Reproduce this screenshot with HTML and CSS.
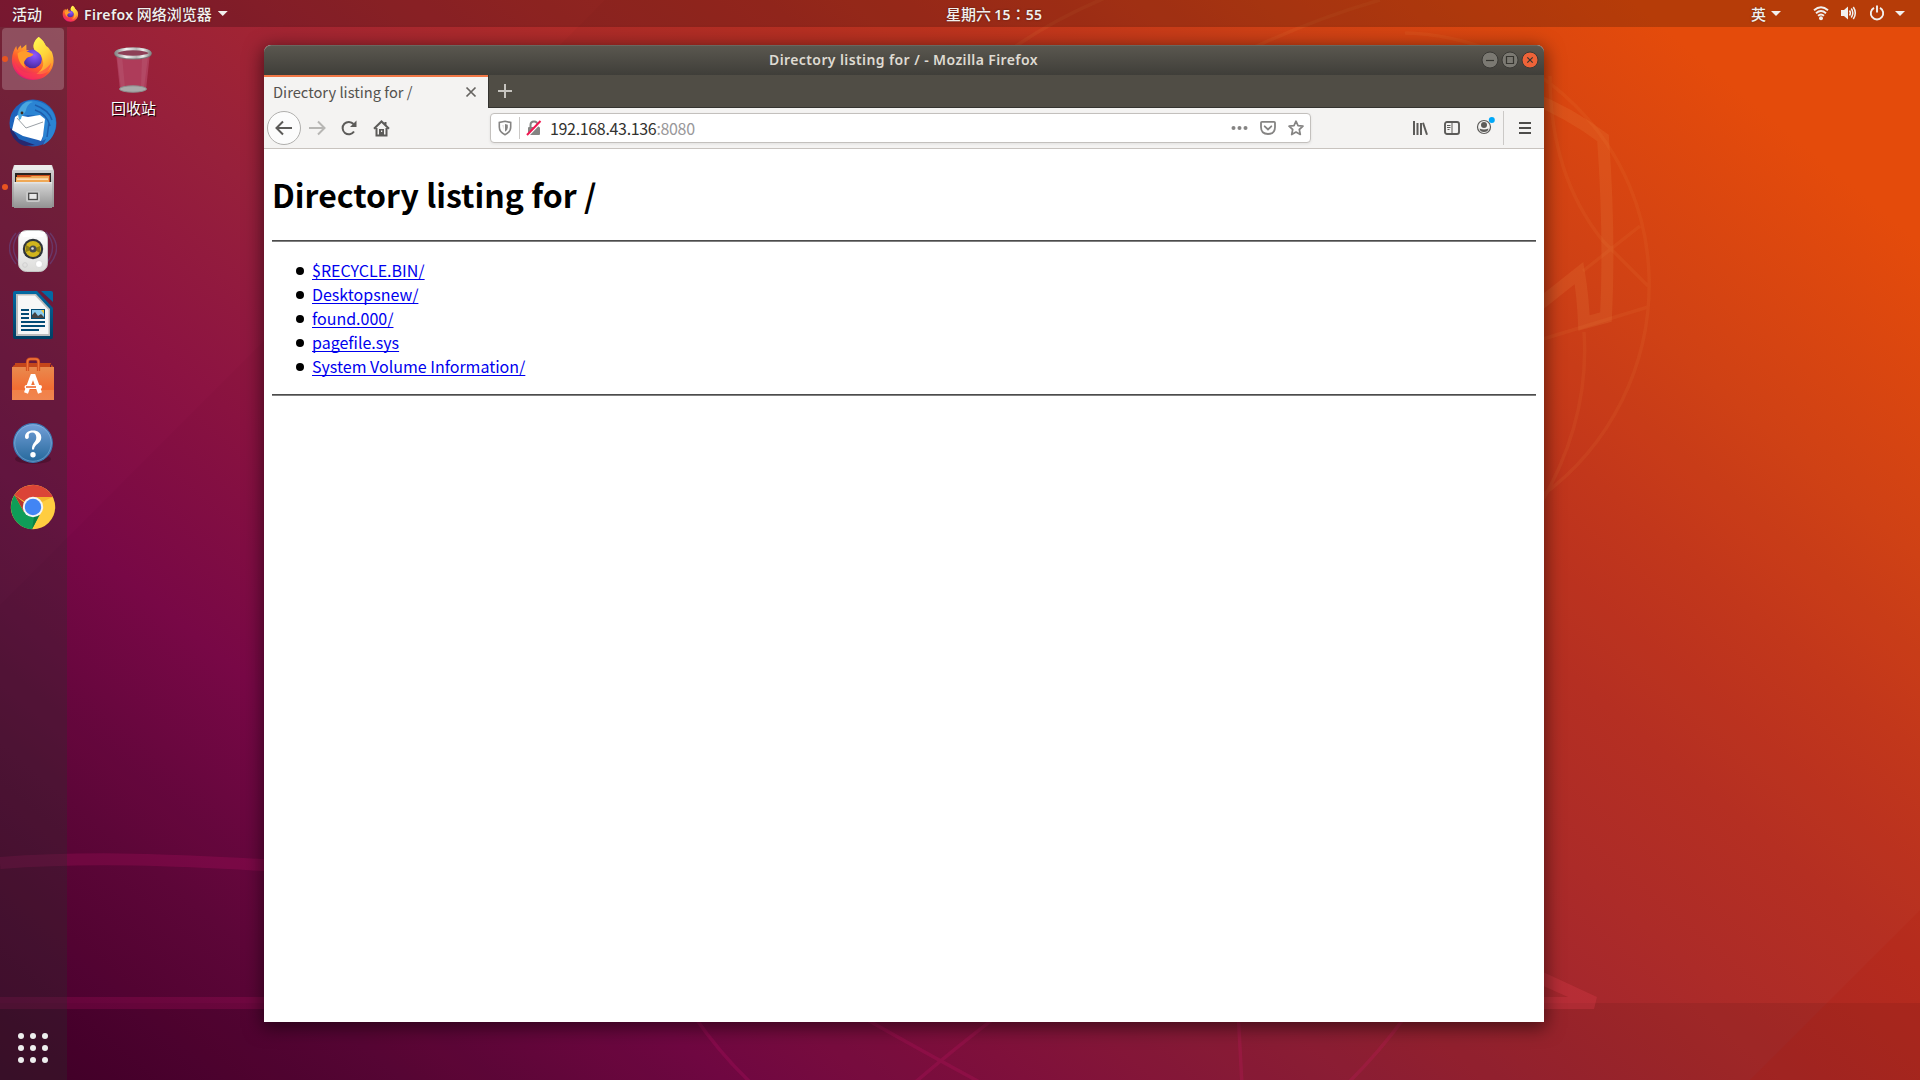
FILE: index.html
```html
<!DOCTYPE html>
<html lang="zh-CN">
<head>
<meta charset="utf-8">
<title>Directory listing for / - Mozilla Firefox</title>
<link rel="stylesheet" href="styles.css">
</head>
<body>
<svg width="0" height="0" class="defs">
  <defs>
    <linearGradient id="ffBody" x1=".8" y1="0" x2=".3" y2="1"><stop offset="0" stop-color="#fff44f"/><stop offset=".35" stop-color="#ffb02e"/><stop offset=".65" stop-color="#ff5a2c"/><stop offset="1" stop-color="#e3127c"/></linearGradient>
    <radialGradient id="ffGlobe" cx=".6" cy=".3" r=".7"><stop offset="0" stop-color="#9059ff"/><stop offset=".5" stop-color="#6b42d8"/><stop offset="1" stop-color="#4b2a9b"/></radialGradient>
    <linearGradient id="ffFlame" x1=".3" y1="0" x2=".8" y2="1"><stop offset="0" stop-color="#fff44f"/><stop offset=".5" stop-color="#ffd339"/><stop offset="1" stop-color="#ff8a2c"/></linearGradient>
    <linearGradient id="tbBlue" x1="0" y1="0" x2="1" y2="1"><stop offset="0" stop-color="#1f5fbb"/><stop offset=".55" stop-color="#1d69bd"/><stop offset="1" stop-color="#2a4aa5"/></linearGradient>
    <linearGradient id="metal" x1="0" y1="0" x2="0" y2="1"><stop offset="0" stop-color="#d8d8d8"/><stop offset="1" stop-color="#929292"/></linearGradient>
    <linearGradient id="writer" x1="0" y1="0" x2="0" y2="1"><stop offset="0" stop-color="#0369a3"/><stop offset="1" stop-color="#023f63"/></linearGradient>
    <linearGradient id="bag" x1="0" y1="0" x2="0" y2="1"><stop offset="0" stop-color="#e98a4e"/><stop offset=".68" stop-color="#f26c32"/><stop offset=".7" stop-color="#f28148"/><stop offset="1" stop-color="#f08550"/></linearGradient>
    <linearGradient id="help" x1="0" y1="0" x2="0" y2="1"><stop offset="0" stop-color="#739fd8"/><stop offset="1" stop-color="#25689b"/></linearGradient>
    <linearGradient id="rim" x1="0" y1="0" x2="1" y2="0"><stop offset="0" stop-color="#8d8d8d"/><stop offset=".3" stop-color="#f2f2f2"/><stop offset=".6" stop-color="#b8b8b8"/><stop offset=".8" stop-color="#eee"/><stop offset="1" stop-color="#8d8d8d"/></linearGradient>
    <linearGradient id="white" x1="0" y1="0" x2="0" y2="1"><stop offset="0" stop-color="#fff"/><stop offset="1" stop-color="#dcdcda"/></linearGradient>
    <symbol id="firefox" viewBox="0 0 48 48">
      <path fill="url(#ffBody)" d="M30 2c4 3 6 6 7.500 9.500 2 .8 3.500 2.500 4.500 4.800 1 0 1.800 1.500 2.300 3.200C49 34 39 47 24 47 11 47 1.500 37 2 25c.3-6 2.500-10.500 4.500-13.500L7.500 16c.8-2.200 2-3.800 3.800-5.400L12 14l5-4 .2 6c4-.8 8 .4 10 2C22 13 26 5 30 2z"/>
      <circle cx="23.500" cy="25" r="9.800" fill="url(#ffGlobe)"/>
      <path fill="url(#ffFlame)" d="M30 2c4 3 6 6 7.500 9.500 6 5.500 8.500 15 5 23-3.500 5.500-9 7.500-15 6 6-3.500 8.500-9 6.500-15-.8-4-3-6.500-6.500-8.500C21.500 12.500 25.500 5 30 2z"/>
      <path fill="#ff9c2a" d="M8 19c4-2.500 7-3 10-1.500 2.500.5 4 2 6.500 2.200-.5 2-3 2.600-5 3.300-2.500 1-3 2.500-4.500 4.500-1 3 .5 5.500 2 7.500-6-3-9-10-9-16z"/>
      <path fill="#ff3b51" opacity=".55" d="M4 25c2 9 9 15 18 15 9 0 16-4 21-11-2 11-10 17-19 17C13 46 4 38 4 25z"/>
    </symbol>
  </defs>
</svg>

<svg class="wallpaper" viewBox="0 0 1920 1080" aria-hidden="true">
  <path class="shade" d="M605 0H1920V1080H0V605z"/>
  <path class="shade strong" d="M0 1003H1920V1080H0z"/>
  <path class="glow" d="M1920 910V1080H1750z"/>
  <g class="pink">
    <path class="thick" d="M0 863C80 857 170 858 320 869"/>
    <path class="thick" d="M0 1003H320"/>
    <path class="thin" d="M690 1010Q718 1052 752 1084M850 1010Q920 1050 985 1085M1005 1010Q955 1048 912 1085M1238 1010L1242 1085M1410 1010Q1380 1052 1346 1085"/>
  </g>
  <path class="tail" fill-rule="evenodd" d="M1530 966L1597 997L1594 1009H1530zM1530 980L1568 997H1530z"/>
  <g class="amber">
    <path class="thick" d="M1530 97Q1570 113 1603 138Q1610 235 1606 317L1584 323Q1583 297 1579 273L1530 312"/>
    <path class="thin" d="M1405 33A250 250 0 0 1 1649 275A262 262 0 0 1 1540 497M1550 76Q1550 175 1603 241L1648 286M1640 226L1583 271M1648 307L1530 343M1584 332Q1590 420 1540 505M1010 50Q1060 15 1120 -8M1240 54Q1310 20 1380 0"/>
  </g>
</svg>

<header class="topbar">
  <div class="top-left">
    <span class="activities">活动</span>
    <span class="appmenu"><svg width="17" height="17"><use href="#firefox"/></svg><b><span class="ff">Firefox</span> 网络浏览器</b><i class="caret"></i></span>
  </div>
  <div class="clock">星期六 <span class="digits">15</span><span class="colon" lang="zh-TW">：</span><span class="digits">55</span></div>
  <div class="top-right">
    <span class="lang">英</span><i class="caret"></i>
    <svg class="wifi" width="16" height="16" viewBox="0 0 16 16"><g fill="none" stroke="#f2f0ee" stroke-width="1.900"><path d="M1 5.300Q8 -.8 15 5.300"/><path d="M3 8.200Q8 3.800 13 8.200"/><path d="M5 10.800Q8 8.300 11 10.800"/></g><circle cx="8" cy="13.300" r="2" fill="#f2f0ee"/></svg>
    <svg class="volume" width="17" height="16" viewBox="0 0 17 16"><path fill="#f2f0ee" d="M1 5h3l4-3.500v13L4 11H1z"/><g fill="none" stroke="#f2f0ee" stroke-width="1.500"><path d="M9.500 5.500q1.800 2.500 0 5"/><path d="M11.300 3.500q3 4.500 0 9"/><path d="M13.300 2q4 6 0 12"/></g></svg>
    <svg class="power" width="16" height="16" viewBox="0 0 16 16" fill="none" stroke="#f2f0ee" stroke-width="1.900"><path d="M5 2.800A6.200 6.200 0 1 0 11 2.800M8 .5V7.500"/></svg>
    <i class="caret last"></i>
  </div>
</header>

<nav class="dock">
  <div class="launcher active running"><svg width="46" height="48" viewBox="0 0 48 48"><use href="#firefox"/></svg></div>
  <div class="launcher"><svg width="48" height="48" viewBox="0 0 48 48">
    <circle cx="24" cy="24" r="23.500" fill="url(#tbBlue)"/>
    <path fill="#27286f" d="M2 29L10 40l16 6-10 1C8 45 2 37 1 30z"/>
    <path fill="#2b84d3" d="M8 16C10 6 18-1 27 2c12 2 20 11 20 22 0 10-5 18-13 22l3-6-4 2c2-8 3-15 0-20-3-6-13-7-19-5l-4 6-2 0z"/>
    <path fill="#fff" d="M3 31L6 18l3-2 10 2 12-2 5 4-2 17-2 5-3-1-15-4z"/>
    <path fill="none" stroke="#9aa0a6" d="M8 19l9 10 17-6"/>
    <path fill="#4aa7df" d="M9 15C11 6 17 1 24 3c-4 1-6 4-7 8-1 4-4 4-5 9l-2 1z"/>
    <path fill="none" stroke="#1d5dae" stroke-width="1.500" d="M26 6q14 5 17 15M26 11q12 4 15 16M40 24l-2 14"/>
    <circle cx="13" cy="14" r="1.400" fill="#3c2b20"/>
  </svg></div>
  <div class="launcher running"><svg width="48" height="48" viewBox="0 0 48 48">
    <path fill="url(#metal)" d="M5 2h38l2 6v36h-2V22H5v22H3V8z"/><path fill="#ececec" d="M6 2h36l2 5H4z"/>
    <path fill="#292421" d="M6 10h36v10H6z"/><path fill="#cb4c19" d="M8 12h33v7H8z"/><path fill="#efa856" d="M7 14h14l2-1h17v7H7z"/><path fill="#fff3dd" d="M8 15.500h31v1.200H8z"/>
    <path fill="url(#metal)" d="M5 19h38v26H5z"/><path fill="#e4e4e4" d="M5 19h38v1.500H5z"/>
    <rect x="17" y="28" width="14" height="11" rx="2" fill="#c9c9c9"/><rect x="19.700" y="30.300" width="8.600" height="6.200" fill="#e8e8e8" stroke="#4a4a4a" stroke-width="1.300"/>
  </svg></div>
  <div class="launcher"><svg width="48" height="48" viewBox="0 0 48 48">
    <g fill="none" stroke="#6560ad" stroke-width="1.400" opacity=".4"><path d="M7 6Q-6 21 7 37M11 5Q-2 20 11 37M41 6q13 15 0 31M37 5q13 15 0 32"/></g>
    <rect x="9.500" y="3.500" width="29" height="41" rx="8" fill="url(#white)" stroke="#c4c4c4"/><path fill="#fff" d="M12 5h24l-2 5H14z"/>
    <circle cx="24" cy="22" r="10.200" fill="#30353a"/><circle cx="24" cy="22" r="8" fill="#d1b51d"/><path fill="#8f7e12" d="M24 22l-7-4v7zM24 22l7-3v7z"/><circle cx="24" cy="22" r="3.500" fill="#474b4e"/><circle cx="23.500" cy="21.500" r="1.300" fill="#ddd"/><circle cx="30" cy="37" r="3.500" fill="#fff" stroke="#ccc" stroke-width=".6"/><circle cx="16" cy="38" r="2.300" fill="none" stroke="#d0d0d0"/>
  </svg></div>
  <div class="launcher"><svg width="48" height="48" viewBox="0 0 48 48">
    <path fill="url(#writer)" d="M6 0h22l16 17v29q0 2-2 2H6q-2 0-2-2V2q0-2 2-2z"/><path fill="#0369a3" d="M32 0h10q2 0 2 2v9z"/>
    <path fill="#bdbdbd" d="M7 3h20l14 15v27H7z"/><path fill="#f7f7f7" d="M9 4.500h17L39.500 19v24H9z"/>
    <path fill="#034b75" d="M12 18h8v2h-8zM12 22h8v2h-8zM12 26h8v2h-8zM12 30h24v2H12zM12 34h24v2H12zM12 38h18v2H12z"/>
    <path fill="#034b75" d="M22 18h14v10H22z"/><path fill="#8bcdf0" d="M23 19h12v8H23z"/><path fill="#f0c63b" d="M32 19h3v4z"/><path fill="#444" d="M23 27v-3l3-3 3 4 3-2 3 3v1z"/>
  </svg></div>
  <div class="launcher"><svg width="48" height="48" viewBox="0 0 48 48">
    <path fill="#c4451a" d="M6 8h36v6H6zM4 11l3-2v5H3zM44 11l-3-2v5h4z"/>
    <path fill="url(#bag)" d="M3 12h42v33H3z"/><path fill="none" stroke="#ce4c1d" stroke-width="3.200" d="M18.500 16V7q0-3 3-3h5q3 0 3 3v9"/><path fill="none" stroke="#f0743a" stroke-width="1.500" d="M18.500 16V7q0-3 3-3h5q3 0 3 3v9"/>
    <path fill="none" stroke="#fff" stroke-width="4.200" d="M17 38l6.300-17h1.400L31 38"/><rect x="15.500" y="30" width="17.500" height="4" rx="2" fill="#fff"/><path stroke="#f06a30" stroke-width="1.600" d="M17 32h10"/>
  </svg></div>
  <div class="launcher"><svg class="help" width="48" height="48" viewBox="0 0 48 48">
    <ellipse cx="24" cy="40" rx="18" ry="5" opacity=".2"/><circle cx="24" cy="24" r="19.300" fill="url(#help)" stroke="#3c78b4" stroke-width="1.200"/><circle cx="24" cy="24" r="18.300" fill="none" stroke="#9fc4e8" stroke-width=".8" opacity=".6"/>
    <path fill="#fff" d="M16 18c0-4 3-6.500 8-6.500s8.300 2.700 8.300 7c0 6-7 6.500-7.300 12h-2c-.3-7 4.300-7 4.300-12 0-3-1.500-5-4-5-2.600 0-4 1.500-3.500 3.500.8 3.500-3.800 4-3.800 1z"/><circle cx="24" cy="35.700" r="2.700" fill="#fff"/>
  </svg></div>
  <div class="launcher"><svg width="48" height="48" viewBox="0 0 48 48">
    <circle cx="24" cy="24" r="22.200" fill="#ffcd40"/>
    <path fill="#db4437" d="M24 24L5.500 12A22.200 22.200 0 0 1 43.800 14H24z"/><path fill="#0f9d58" d="M5.500 12A22.200 22.200 0 0 0 23 46.200L31 31 24 24 15 29z"/>
    <path fill="#f4b52e" d="M24 14h19.800L33 19z"/><path fill="#b7352c" d="M5.500 12l9.500 17 2-8z"/><path fill="#0b8043" d="M31 31l-8 15.200L25 34z"/>
    <circle cx="24" cy="24" r="10.200" fill="#f5f5f5"/><circle cx="24" cy="24" r="8.200" fill="#4285f4"/>
  </svg></div>
  <svg class="apps" width="48" height="48" viewBox="0 0 48 48" fill="#eee"><circle cx="12" cy="12" r="3"/><circle cx="24" cy="12" r="3"/><circle cx="36" cy="12" r="3"/><circle cx="12" cy="24" r="3"/><circle cx="24" cy="24" r="3"/><circle cx="36" cy="24" r="3"/><circle cx="12" cy="36" r="3"/><circle cx="24" cy="36" r="3"/><circle cx="36" cy="36" r="3"/></svg>
</nav>

<div class="trash">
  <svg width="48" height="50" viewBox="0 0 48 50">
    <path fill="#c4587a" fill-opacity=".5" d="M7 7h34l-4 37H11z"/><path fill="#fff" opacity=".07" d="M8 10h5l3 32h-4zM33 10h6l-4 32h-3z"/>
    <ellipse cx="24" cy="43" rx="13.500" ry="3.200" fill="#aaa" stroke="#8d8d8d"/>
    <ellipse cx="24" cy="7.500" rx="17.300" ry="4.600" fill="none" stroke="#777" stroke-width="3"/><ellipse cx="24" cy="7" rx="17" ry="4.200" fill="#8d4057" stroke="url(#rim)" stroke-width="2.800"/>
  </svg>
  <span>回收站</span>
</div>

<section class="window">
  <div class="titlebar">
    <span class="title">Directory listing for / - Mozilla Firefox</span>
    <div class="controls">
      <svg width="18" height="18" viewBox="0 0 18 18"><circle cx="9" cy="9" r="8" class="ctl"/><path d="M5 9.500h8"/></svg>
      <svg width="18" height="18" viewBox="0 0 18 18"><circle cx="9" cy="9" r="8" class="ctl"/><path d="M5.500 5.500h7v7h-7z"/></svg>
      <svg width="18" height="18" viewBox="0 0 18 18"><circle cx="9" cy="9" r="8" class="ctl close"/><path d="M6.300 6.300l5.400 5.400M11.700 6.300l-5.400 5.400"/></svg>
    </div>
  </div>
  <div class="tabs">
    <div class="tab"><span>Directory listing for /</span><svg width="12" height="12" viewBox="0 0 12 12"><path d="M1.500 1.500l9 9M10.500 1.500l-9 9" stroke="#666461" stroke-width="1.700"/></svg></div>
    <svg class="newtab" width="14" height="14" viewBox="0 0 14 14"><path d="M7 0v14M0 7h14" stroke="#c6c4bf" stroke-width="2"/></svg>
  </div>
  <div class="toolbar">
    <div class="nav">
      <span class="back"><svg width="18" height="16" viewBox="0 0 18 16"><path class="ln" d="M17 8H2M8 1.500L1.500 8 8 14.500"/></svg></span>
      <svg class="forward" width="18" height="16" viewBox="0 0 18 16"><path class="ln dim" d="M1 8h15M10 1.500L16.500 8 10 14.500"/></svg>
      <svg class="reload" width="16" height="16" viewBox="0 0 16 16"><path class="ln" d="M13 11.500A6.200 6.200 0 1 1 12.500 4"/><path fill="#5c5b59" d="M15.500.5v6.500H9z"/></svg>
      <svg class="home" width="17" height="17" viewBox="0 0 17 17"><path class="ln" d="M1 8.700L8.500 1.500 16 8.700M3.500 8v7.500h10V8M12.500 2v3"/><path fill="#5c5b59" d="M6 9h5v6H6z"/><path fill="#f4f3f2" d="M8 10.500h1.200v1.500H8z"/></svg>
    </div>
    <div class="urlbar">
      <svg width="14" height="16" viewBox="0 0 14 16"><path fill="none" stroke="#858483" stroke-width="1.600" d="M7 1.200L12.700 2.500v4.500q0 5-5.700 7.700Q1.300 12 1.300 7V2.500z"/><path fill="#858483" d="M7 4l2.800.8v3q0 2.200-2.800 4z"/><path fill="#858483" d="M4.500 5h1v5z" opacity=".4"/></svg>
      <i class="sep"></i>
      <svg class="lock" width="16" height="16" viewBox="0 0 16 16"><path fill="none" stroke="#858483" stroke-width="2" d="M4.500 8V5q0-3.500 3.500-3.500T11.500 5v3"/><rect x="2" y="7" width="12" height="8" rx="1" fill="#858483"/><path stroke="#fff" stroke-width="3" d="M1.500 15.500L15 1.500"/><path stroke="#f0164f" stroke-width="2" d="M1 15L14.500 1"/></svg>
      <span class="url">192.168.43.136<em>:8080</em></span>
      <svg class="dots" width="17" height="6" viewBox="0 0 17 6" fill="#858483"><circle cx="2.500" cy="3" r="2"/><circle cx="8.500" cy="3" r="2"/><circle cx="14.500" cy="3" r="2"/></svg>
      <svg class="pocket" width="16" height="16" viewBox="0 0 16 16" fill="none" stroke="#858483" stroke-width="1.800"><path d="M2 1.800h12q1 0 1 1V7Q15 14 8 14T1 7V2.800q0-1 1-1z"/><path stroke-linecap="round" d="M4.700 6.300L8 9.500l3.300-3.200"/></svg>
      <svg class="star" width="16" height="16" viewBox="0 0 16 16" fill="none" stroke="#858483" stroke-width="1.700" stroke-linejoin="round"><path d="M8 1.200l2 4.500 5 .5-3.700 3.300 1 5L8 12l-4.300 2.500 1-5L1 6.200l5-.5z"/></svg>
    </div>
    <div class="tools">
      <svg width="16" height="16" viewBox="0 0 16 16"><path stroke="#5c5b59" stroke-width="2" d="M2 1v14M5.500 3v12M9 3v12M11 2.700l4 12"/></svg>
      <svg class="sidebar" width="16" height="14" viewBox="0 0 16 14"><rect x="1" y="1" width="14" height="12" rx="2" fill="none" stroke="#5c5b59" stroke-width="1.900"/><path stroke="#5c5b59" d="M8 1v12M3 4.500h3.500M3 6.500h3.500M3.500 8.500h2"/></svg>
      <svg class="account" width="19" height="18" viewBox="0 0 19 18"><circle cx="8" cy="10" r="6.500" fill="none" stroke="#5c5b59" stroke-width="1.200"/><circle cx="8" cy="8" r="3" fill="#5c5b59"/><path fill="#5c5b59" d="M3.500 11.500q4.500 2 9 0Q12 15 8 15T3.500 11.500z"/><circle cx="15.800" cy="3" r="3" fill="#00a8f8"/></svg>
      <i class="sep"></i>
      <svg class="menu" width="12" height="12" viewBox="0 0 12 12"><path stroke="#4d4c4a" stroke-width="1.900" d="M0 1h12M0 6h12M0 11h12"/></svg>
    </div>
  </div>
  <main class="page">
    <h1>Directory listing for /</h1>
    <hr>
    <ul>
      <li><a href="#">$RECYCLE.BIN/</a></li>
      <li><a href="#">Desktopsnew/</a></li>
      <li><a href="#">found.000/</a></li>
      <li><a href="#">pagefile.sys</a></li>
      <li><a href="#">System Volume Information/</a></li>
    </ul>
    <hr>
  </main>
</section>
</body>
</html>
```
FILE: styles.css
```css
* { box-sizing: border-box; }
html, body { height: 100%; }
body {
  margin: 0;
  overflow: hidden;
  display: flex;
  flex-direction: column;
  font-family: "Noto Sans CJK SC", sans-serif;
  background: linear-gradient(40deg, #46002b 0%, #5f073a 12.6%, #7b0948 22.6%, #8c1342 32%, #97203b 41%, #a32532 48%, #b02c29 57%, #b93023 64%, #c6391c 72%, #d44316 79.300%, #e94d0c 91%);
}
svg { display: block; flex: none; }
.defs, .wallpaper { position: absolute; left: 0; top: 0; }
.wallpaper { width: 1920px; height: 1080px; }
.shade { fill: #000; fill-opacity: .02; }
.shade.strong { fill-opacity: .07; }
.glow { fill: #b41400; fill-opacity: .12; }
.pink { fill: none; stroke: #e01a78; stroke-opacity: .17; }
.amber { fill: none; stroke: #f09a50; stroke-opacity: .15; }
.thick { stroke-width: 12px; }
.thin { stroke-width: 3.500px; }
.amber .thin { stroke-opacity: .09; }
.tail { fill: #d83a48; fill-opacity: .35; }

.topbar {
  position: relative;
  height: 27px;
  flex: none;
  display: grid;
  grid-template-columns: 1fr auto 1fr;
  align-items: center;
  background: rgba(0, 0, 0, .2);
  color: #f2f0ee;
  font-size: 15px;
  line-height: 27px;
  font-weight: 500;
  text-shadow: 0 0 2px rgba(0, 0, 0, .5);
}
.top-left, .top-right, .appmenu { display: flex; align-items: center; }
.top-left { padding-left: 12px; gap: 20px; height: 27px; }
.activities, .appmenu b, .lang { margin-top: 0; }
.appmenu svg { margin-right: 6px; margin-top: -1px; }
.appmenu b { font-weight: 500; white-space: nowrap; }
.appmenu .ff, .title, .digits { font-family: "Noto Sans", sans-serif; font-weight: 600; font-size: 14px; }
.appmenu .ff { letter-spacing: .35px; margin-left: -1px; }
.lang { margin-right: -1px; }
.caret {
  width: 10px;
  height: 5px;
  margin-left: 6px;
  background: #f2f0ee;
  clip-path: polygon(0 0, 100% 0, 50% 100%);
}
.clock { height: 27px; margin: -1px 0 0 68px; white-space: pre; }
.colon { font-family: "Noto Sans CJK TC", sans-serif; }
.digits { letter-spacing: .2px; }
.top-right { justify-content: flex-end; padding-right: 15px; height: 27px; }
.wifi { margin-left: 32px; }
.volume { margin-left: 11px; }
.power { margin-left: 12px; }
.wifi, .volume, .power { margin-top: -1px; }
.caret.last { margin-left: 10px; }

.dock {
  position: relative;
  width: 67px;
  flex: 1;
  display: flex;
  flex-direction: column;
  align-items: flex-start;
  gap: 2px;
  padding: 1px 0 8px 2px;
  background: rgba(40, 50, 42, .3);
}
.launcher {
  position: relative;
  width: 62px;
  height: 62px;
  flex: none;
  display: flex;
  align-items: center;
  justify-content: center;
  border-radius: 4px;
}
.launcher.active { background: rgba(255, 255, 255, .2); }
.launcher.active svg { margin-top: -2px; }
.launcher.running::before {
  content: "";
  position: absolute;
  left: 0;
  top: 28px;
  width: 6px;
  height: 6px;
  border-radius: 50%;
  background: #e95420;
}
.apps { margin: auto 0 0 7px; }

.trash {
  position: absolute;
  left: 92px;
  top: 46px;
  width: 82px;
  display: flex;
  flex-direction: column;
  align-items: center;
  color: #fff;
  font-size: 15px;
  line-height: 22px;
  text-shadow: 1px 1px 1px #000;
}
.trash span { margin-top: 1px; padding-left: 1px; }

.window {
  position: absolute;
  left: 264px;
  top: 45px;
  width: 1280px;
  height: 977px;
  display: flex;
  flex-direction: column;
  border-radius: 7px 7px 0 0;
  background: #fff;
  box-shadow: 0 4px 18px 2px rgba(0, 0, 0, .5);
}
.titlebar {
  height: 30px;
  flex: none;
  display: grid;
  grid-template-columns: 1fr auto 1fr;
  align-items: center;
  padding-right: 5px;
  border-radius: 7px 7px 0 0;
  border-top: 1px solid #6a675f;
  background: linear-gradient(#5a574f, #3f3e39);
}
.title { grid-column: 2; margin-top: -2px; color: #dfdbd2; white-space: pre; line-height: 27px; padding-left: 4px; letter-spacing: .4px; }
.controls { display: flex; justify-content: flex-end; gap: 2px; margin-top: -1px; }
.controls path { fill: none; stroke: #35342f; stroke-width: 1.200px; }
.ctl { fill: #7b7972; stroke: #3a3935; }
.ctl.close { fill: #ee6338; }
.tabs { height: 33px; flex: none; display: flex; align-items: center; background: #504d45; box-shadow: inset 0 -1px #34332f; }
.tab {
  width: 224px;
  height: 33px;
  display: flex;
  align-items: center;
  justify-content: space-between;
  padding: 0 11px 2px 9px;
  border-top: 2px solid #f07746;
  background: #f4f3f2;
  color: #54524f;
  font-size: 14.700px;
  line-height: 30px;
  box-shadow: 1px 0 #34332f;
}
.newtab { margin: -2px 0 0 10px; }
.toolbar {
  height: 41px;
  flex: none;
  display: flex;
  align-items: center;
  background: #f4f3f2;
  border-bottom: 1px solid #c8c3bf;
}
.nav { width: 226px; display: flex; align-items: center; padding-left: 3px; }
.back {
  width: 34px;
  height: 34px;
  display: flex;
  align-items: center;
  justify-content: center;
  border: 1px solid #b0afad;
  border-radius: 50%;
  background: #fcfcfc;
}
.ln { fill: none; stroke: #5c5b59; stroke-width: 2px; }
.ln.dim { stroke: #b7b6b4; }
.forward { margin-left: 7px; }
.reload { margin-left: 15px; }
.home { margin-left: 16px; }
.urlbar {
  width: 821px;
  height: 30px;
  display: flex;
  align-items: center;
  padding: 0 6px 0 7px;
  border: 1px solid #c3c0bd;
  border-radius: 4px;
  background: #fff;
  box-shadow: 0 1px 3px rgba(0, 0, 0, .08);
}
.sep { width: 1px; height: 22px; background: #cbc9c7; margin-left: 7px; }
.lock { margin-left: 6px; }
.url { flex: 1; margin-left: 8px; font-size: 16px; line-height: 28px; color: #33322f; letter-spacing: -.33px; }
.url em { font-style: normal; color: #99989a; }
.pocket { margin-left: 12px; }
.star { margin-left: 12px; }
.tools { flex: 1; display: flex; align-items: center; justify-content: flex-end; padding-right: 13px; }
.sidebar { margin-left: 16px; }
.account { margin: -4px 0 0 16px; }
.tools .sep { height: 34px; margin-left: 8px; }
.menu { margin-left: 15px; }

.page { flex: 1; padding: 0 8px; color: #000; font-size: 16px; line-height: 24px; }
h1 { margin: 21px 0 22px; font-size: 32px; line-height: 48px; font-weight: 700; }
hr { height: 2px; margin: 0; border: 0; border-top: 1px solid #4c4c4c; background: #808080; }
ul { margin: 16px 0; padding: 0 0 0 24px; list-style: none; }
li { height: 24px; display: flex; align-items: center; }
li::before { content: ""; width: 8px; height: 8px; margin: 1px 8px 0 0; border-radius: 50%; background: #000; }
a { color: #0000ee; text-decoration: underline; text-decoration-thickness: 1px; text-underline-offset: 2px; text-decoration-skip-ink: none; }
```
